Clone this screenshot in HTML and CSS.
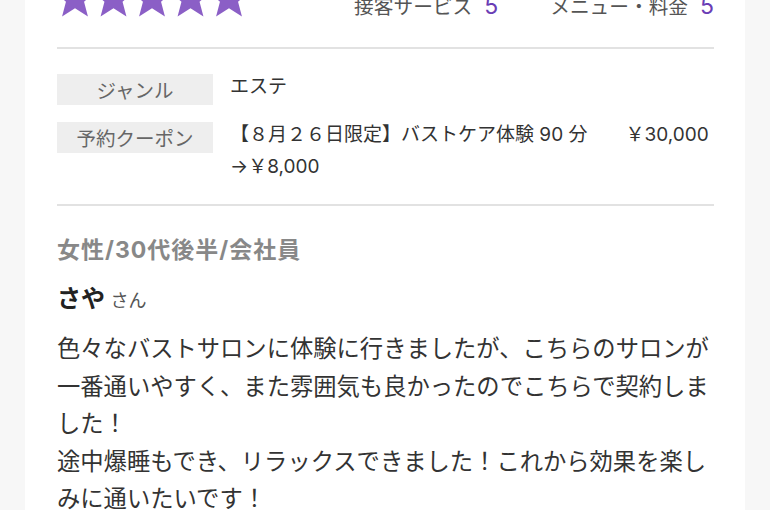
FILE: index.html
```html
<!DOCTYPE html>
<html lang="ja">
<head>
  <meta charset="utf-8">
  <title>口コミ</title>
  <link rel="stylesheet" href="styles.css">
</head>
<body>

<div class="card">
  <div class="rating">
    <svg class="stars" width="200" height="42" viewBox="0 0 200 42">
      <defs>
        <polygon id="star" points="0,-22 5.58,-7.69 20.92,-6.8 9.04,2.94 12.93,17.8 0,9.5 -12.93,17.8 -9.04,2.94 -20.92,-6.8 -5.58,-7.69"/>
      </defs>
      <use href="#star" x="18" y="22.7"/>
      <use href="#star" x="56.5" y="22.7"/>
      <use href="#star" x="95" y="22.7"/>
      <use href="#star" x="133.5" y="22.7"/>
      <use href="#star" x="172" y="22.7"/>
    </svg>
    <div class="scores">
      <div class="score"><span class="score-label">接客サービス</span><span class="score-num">5</span></div>
      <div class="score"><span class="score-label">メニュー・料金</span><span class="score-num">5</span></div>
    </div>
  </div>

  <div class="info">
    <div class="info-row">
      <div class="info-label">ジャンル</div>
      <div class="info-value">エステ</div>
    </div>
    <div class="info-row">
      <div class="info-label">予約クーポン</div>
      <div class="info-value">【８月２６日限定】バストケア体験 90 分　　￥30,000<br>→￥8,000</div>
    </div>
  </div>

  <div class="review">
    <div class="profile">女性/30代後半/会社員</div>
    <div class="name">さや <span class="honor">さん</span></div>
    <p class="body">色々なバストサロンに体験に行きましたが、こちらのサロンが一番通いやすく、また雰囲気も良かったのでこちらで契約しました！<br>途中爆睡もでき、リラックスできました！これから効果を楽しみに通いたいです！</p>
  </div>
</div>

</body>
</html>
```

FILE: styles.css
```css
body {
  margin: 0;
  background: #f7f7f7;
  font-family: "Noto Sans CJK JP", "Noto Sans", sans-serif;
  color: #333;
}

.card {
  margin: -30px 25px 0;
  padding: 0 31px 40px 32px;
  background: #fff;
}

/* rating */
.rating {
  display: flex;
  justify-content: space-between;
  align-items: flex-end;
  height: 48px;
  padding-bottom: 29px;
  border-bottom: 2px solid #e2e2e2;
}

.stars {
  display: block;
  overflow: visible;
  fill: #8b5fc6;
}

.scores {
  display: flex;
  gap: 52px;
}

.score {
  display: flex;
  align-items: baseline;
  gap: 12px;
  line-height: 1;
}

.score-label {
  font-size: 19.7px;
  color: #555;
}

.score-num {
  font-family: Inter, sans-serif;
  font-size: 23px;
  color: #6a3db5;
}

/* info table */
.info {
  display: flex;
  flex-direction: column;
  gap: 14px;
  padding: 22px 0 21px;
  border-bottom: 2px solid #e2e2e2;
}

.info-row {
  display: grid;
  grid-template-columns: 156px 1fr;
  column-gap: 17px;
  align-items: start;
}

.info-label {
  margin-top: 3px;
  height: 31px;
  line-height: 31px;
  background: #eeeeee;
  color: #666;
  font-size: 19.5px;
  text-align: center;
}

.info-value {
  font-family: Inter, "Noto Sans CJK JP", sans-serif;
  font-size: 19px;
  line-height: 32px;
  color: #333;
}

/* review */
.review {
  padding-top: 28px;
}

.profile {
  font-family: Inter, "Noto Sans CJK JP", sans-serif;
  font-size: 23px;
  font-weight: bold;
  letter-spacing: 1px;
  line-height: 32px;
  color: #888;
}

.name {
  margin-top: 15px;
  font-size: 24px;
  font-weight: bold;
  line-height: 32px;
  color: #222;
}

.honor {
  font-size: 18px;
  font-weight: normal;
  color: #555;
}

.body {
  margin: 14px 0 0;
  font-size: 23.3px;
  line-height: 37.5px;
  color: #333;
}
```
